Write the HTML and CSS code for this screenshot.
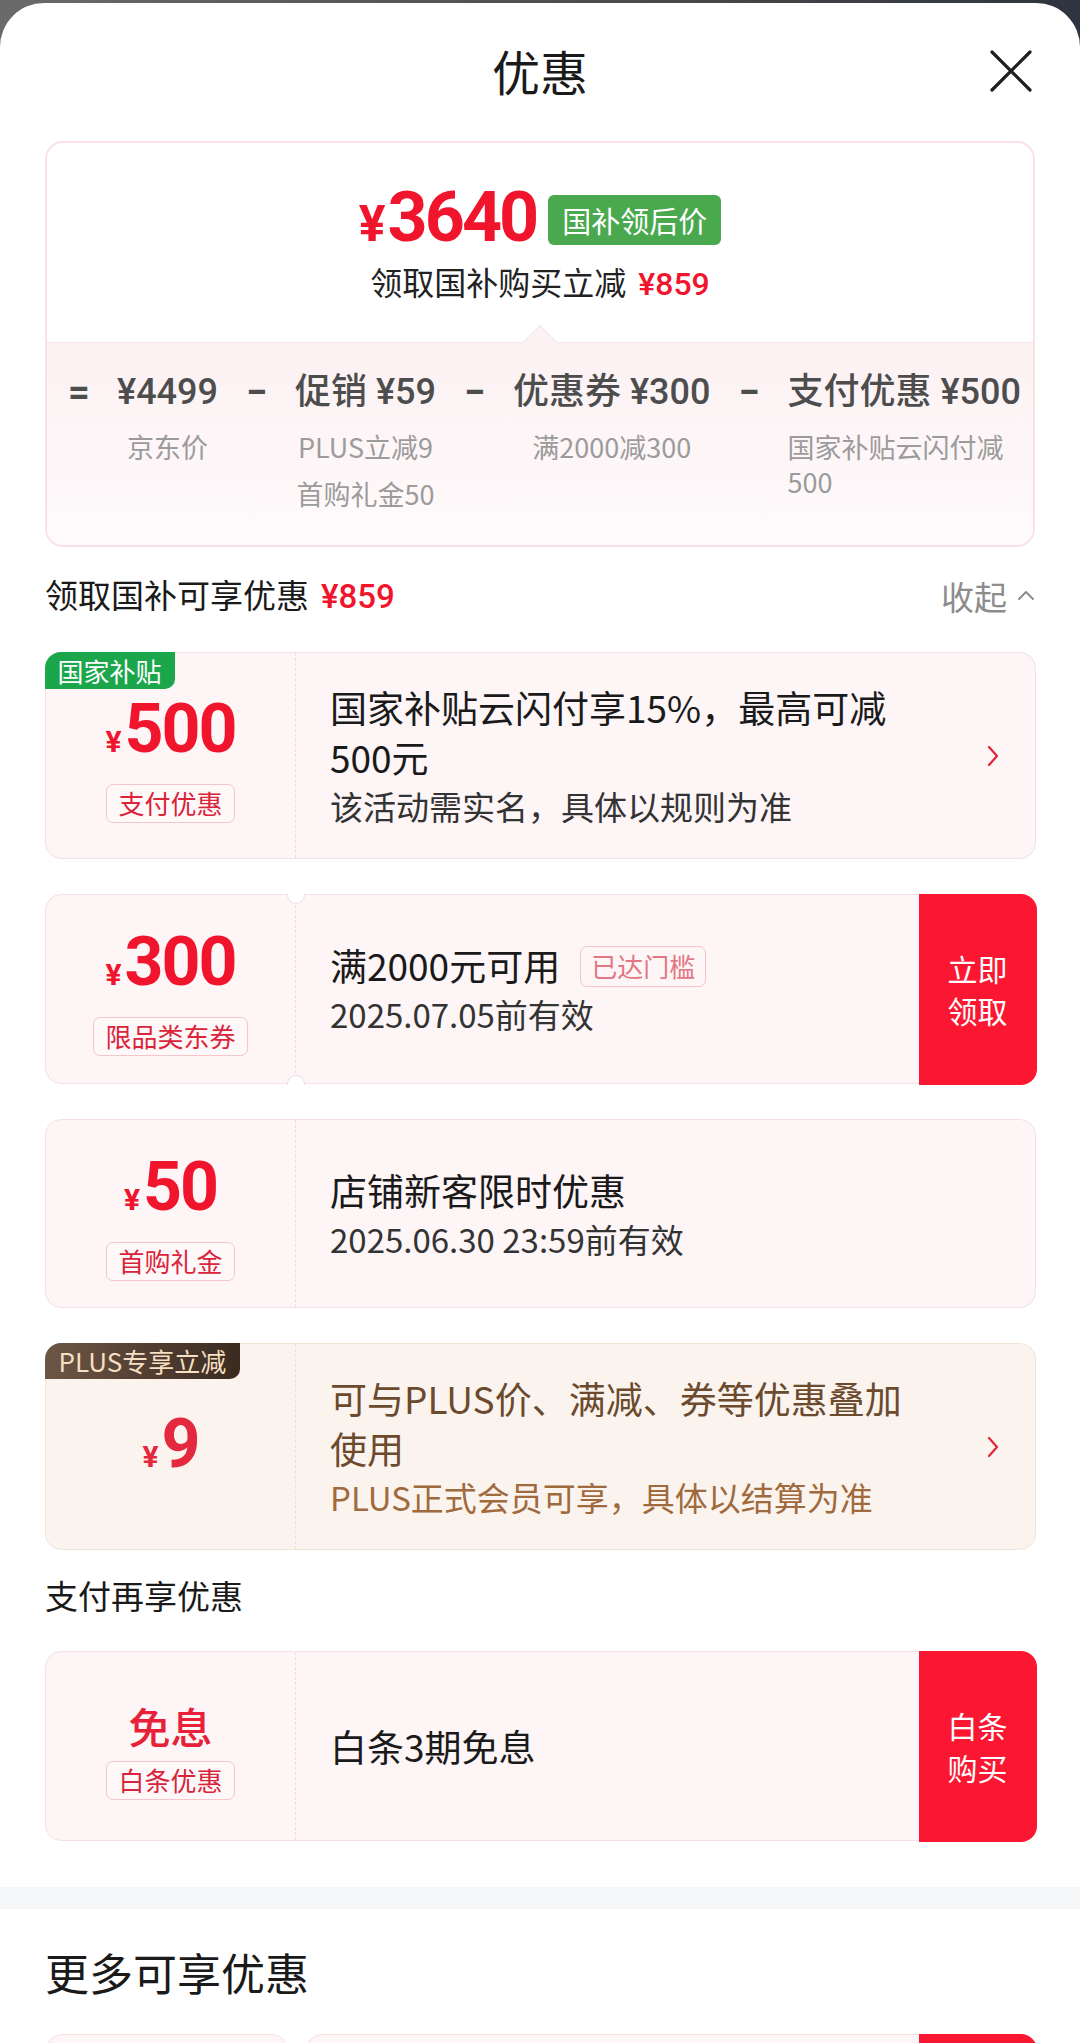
FILE: index.html
```html
<!DOCTYPE html>
<html lang="zh-CN">
<head>
<meta charset="utf-8">
<title>优惠</title>
<link rel="stylesheet" href="styles.css">
</head>
<body>
<div class="sheet">
  <header class="head">
    <h1 class="head-title">优惠</h1>
    <span class="close" aria-label="关闭">
      <svg viewBox="0 0 42 42" width="42" height="42"><path d="M2 2 L40 40 M40 2 L2 40" fill="none" stroke="#1f1f1f" stroke-width="3.2" stroke-linecap="round"/></svg>
    </span>
  </header>

  <section class="summary">
    <div class="sum-top">
      <div class="price-line">
        <span class="price-big"><span class="yen">¥</span>3640</span>
        <span class="tag-green">国补领后价</span>
      </div>
      <div class="sub-line">领取国补购买立减<span class="red">¥859</span></div>
    </div>
    <div class="sum-bottom">
      <span class="pointer"></span>
      <div class="calc">
        <span class="op">=</span>
        <div class="calc-item">
          <div class="amt">¥4499</div>
          <div class="lbl">京东价</div>
        </div>
        <span class="op">−</span>
        <div class="calc-item">
          <div class="amt">促销 ¥59</div>
          <div class="lbl">PLUS立减9</div>
          <div class="lbl">首购礼金50</div>
        </div>
        <span class="op">−</span>
        <div class="calc-item">
          <div class="amt">优惠券 ¥300</div>
          <div class="lbl">满2000减300</div>
        </div>
        <span class="op">−</span>
        <div class="calc-item">
          <div class="amt">支付优惠 ¥500</div>
          <div class="lbl lbl-wrap">国家补贴云闪付减500</div>
        </div>
      </div>
    </div>
  </section>

  <div class="sec">
    <div class="sec-title">领取国补可享优惠<span class="red">¥859</span></div>
    <div class="fold">收起
      <svg width="18" height="11" viewBox="0 0 18 11"><path d="M2 9 L9 2 L16 9" fill="none" stroke="#8c8c8c" stroke-width="2" stroke-linecap="round" stroke-linejoin="round"/></svg>
    </div>
  </div>

  <div class="list">
    <div class="coupon tall">
      <span class="corner-badge green">国家补贴</span>
      <div class="c-left">
        <div class="c-amt"><span class="c-yen">¥</span>500</div>
        <span class="c-tag">支付优惠</span>
      </div>
      <div class="c-body">
        <div class="c-text">
          <p class="c-title">国家补贴云闪付享15%，最高可减500元</p>
          <p class="c-desc">该活动需实名，具体以规则为准</p>
        </div>
        <span class="c-chev"><svg width="12" height="22" viewBox="0 0 12 22"><path d="M2 2 L10 11 L2 20" fill="none" stroke="#e3233a" stroke-width="2.2" stroke-linecap="round" stroke-linejoin="round"/></svg></span>
      </div>
    </div>

    <div class="coupon">
      <span class="notch notch-top"></span>
      <span class="notch notch-bottom"></span>
      <div class="c-left">
        <div class="c-amt"><span class="c-yen">¥</span>300</div>
        <span class="c-tag">限品类东券</span>
      </div>
      <div class="c-body">
        <div class="c-text">
          <p class="c-title">满2000元可用<span class="mini-tag">已达门槛</span></p>
          <p class="c-desc">2025.07.05前有效</p>
        </div>
      </div>
      <div class="c-btn">立即<br>领取</div>
    </div>

    <div class="coupon short">
      <div class="c-left">
        <div class="c-amt"><span class="c-yen">¥</span>50</div>
        <span class="c-tag">首购礼金</span>
      </div>
      <div class="c-body">
        <div class="c-text">
          <p class="c-title">店铺新客限时优惠</p>
          <p class="c-desc">2025.06.30 23:59前有效</p>
        </div>
      </div>
    </div>

    <div class="coupon tall plus">
      <span class="corner-badge dark">PLUS专享立减</span>
      <div class="c-left">
        <div class="c-amt plus-amt"><span class="c-yen">¥</span>9</div>
      </div>
      <div class="c-body">
        <div class="c-text">
          <p class="c-title">可与PLUS价、满减、券等优惠叠加<br>使用</p>
          <p class="c-desc">PLUS正式会员可享，具体以结算为准</p>
        </div>
        <span class="c-chev"><svg width="12" height="22" viewBox="0 0 12 22"><path d="M2 2 L10 11 L2 20" fill="none" stroke="#e3233a" stroke-width="2.2" stroke-linecap="round" stroke-linejoin="round"/></svg></span>
      </div>
    </div>
  </div>

  <div class="sec sec-pay">
    <div class="sec-title">支付再享优惠</div>
  </div>

  <div class="list">
    <div class="coupon">
      <div class="c-left">
        <div class="c-word">免息</div>
        <span class="c-tag">白条优惠</span>
      </div>
      <div class="c-body">
        <div class="c-text">
          <p class="c-title">白条3期免息</p>
        </div>
      </div>
      <div class="c-btn">白条<br>购买</div>
    </div>
  </div>

  <div class="band"></div>

  <h2 class="more-title">更多可享优惠</h2>
  <div class="more-row">
    <div class="more-box"></div>
    <div class="more-box more-main"><span class="more-btn"></span></div>
  </div>
</div>
</body>
</html>
```

FILE: styles.css
```css
* { box-sizing: border-box; margin: 0; padding: 0; }

html, body {
  width: 1080px;
  height: 2043px;
  overflow: hidden;
}

body {
  background: linear-gradient(90deg, #6a6a6a 0%, #4a4a4a 60%, #2e3440 100%);
  font-family: "Noto Sans CJK SC", "Noto Sans", sans-serif;
  color: #1a1a1a;
}

.sheet {
  margin-top: 3px;
  height: 2040px;
  background: #fff;
  border-radius: 44px 44px 0 0;
  overflow: hidden;
}

/* header */
.head {
  position: relative;
  height: 138px;
  padding-top: 37px;
  text-align: center;
}
.head-title {
  font-size: 48px;
  font-weight: 400;
  line-height: 60px;
  color: #1a1a1a;
}
.close {
  position: absolute;
  right: 48px;
  top: 47px;
  width: 42px;
  height: 42px;
}
.close svg { display: block; }

/* summary card */
.summary {
  margin: 0 45px;
  border: 2px solid #fae1e6;
  border-radius: 18px;
  overflow: hidden;
}
.sum-top {
  padding: 46px 0 38px;
  text-align: center;
  background: #fff;
}
.price-line {
  display: flex;
  justify-content: center;
  align-items: center;
  gap: 12px;
  height: 62px;
}
.price-big {
  font-family: Roboto, "Noto Sans", sans-serif;
  font-weight: 700;
  font-size: 70px;
  letter-spacing: -3px;
  line-height: 62px;
  color: #f0142c;
}
.price-big .yen {
  font-size: 50px;
  letter-spacing: 0;
  margin-right: 2px;
}
.tag-green {
  background: #4aa94f;
  color: #fff;
  font-size: 29px;
  height: 50px;
  line-height: 50px;
  padding: 0 14px;
  border-radius: 6px;
}
.sub-line {
  margin-top: 10px;
  font-size: 32px;
  line-height: 40px;
  color: #222;
}
.sub-line .red {
  color: #f0142c;
  font-family: Roboto, sans-serif;
  font-weight: 500;
  margin-left: 12px;
}

.sum-bottom {
  position: relative;
  height: 203px;
  background: linear-gradient(#fcf1f3, #fefafb);
  border-top: 1.5px solid #f8e6ea;
}
.pointer {
  position: absolute;
  left: 50%;
  top: -13px;
  width: 24px;
  height: 24px;
  margin-left: -12px;
  transform: rotate(45deg);
  background: #fcf1f3;
  border-left: 1.5px solid #f8e6ea;
  border-top: 1.5px solid #f8e6ea;
}
.calc {
  display: flex;
  align-items: flex-start;
  gap: 28px;
  padding: 24px 0 0 21px;
}
.op {
  width: 21px;
  font-family: Roboto, sans-serif;
  font-weight: 700;
  font-size: 38px;
  line-height: 50px;
  text-align: center;
  color: #4d4d4d;
}
.calc-item {
  display: flex;
  flex-direction: column;
  align-items: center;
}
.amt {
  font-family: Roboto, "Noto Sans CJK SC", sans-serif;
  font-weight: 500;
  font-size: 36px;
  line-height: 50px;
  color: #4d4d4d;
  white-space: nowrap;
}
.lbl {
  margin-top: 12px;
  font-size: 27px;
  line-height: 35px;
  color: #9b9b9b;
  white-space: nowrap;
}
.lbl + .lbl { margin-top: 12px; }
.lbl-wrap {
  width: 0;
  min-width: 100%;
  white-space: normal;
  text-align: left;
}

/* section headers */
.sec {
  display: flex;
  justify-content: space-between;
  align-items: center;
  padding: 25px 45px 33px;
  font-size: 33px;
  line-height: 44px;
  color: #1a1a1a;
}
.sec .red {
  color: #f0142c;
  font-family: Roboto, sans-serif;
  font-weight: 500;
  margin-left: 12px;
}
.fold {
  display: flex;
  align-items: center;
  gap: 10px;
  color: #8c8c8c;
}
.sec-pay { padding: 23px 45px 34px; }

/* coupon cards */
.list {
  display: flex;
  flex-direction: column;
  gap: 35px;
}
.coupon {
  position: relative;
  display: flex;
  height: 190px;
  margin: 0 44px 0 45px;
  border: 1.5px solid #f6e0e4;
  border-radius: 16px;
  background: #fdf5f6;
}
.coupon.tall { height: 207px; }
.coupon.short { height: 189px; }

.corner-badge {
  position: absolute;
  left: -1.5px;
  top: -1.5px;
  height: 37px;
  padding: 0 13px;
  font-size: 26px;
  line-height: 37px;
  color: #fff;
  border-radius: 16px 0 10px 0;
}
.corner-badge.green { background: #1ba64b; }
.corner-badge.dark {
  padding: 0 14px;
  height: 36px;
  line-height: 36px;
  color: #f6dfc2;
  background: linear-gradient(90deg, #6d5645, #3a2a20);
}

.c-left {
  flex: none;
  width: 250px;
  display: flex;
  flex-direction: column;
  align-items: center;
  justify-content: center;
  padding-top: 8px;
  border-right: 1.5px dashed #f2dadf;
}
.c-amt {
  font-family: Roboto, sans-serif;
  font-weight: 700;
  font-size: 68px;
  line-height: 64px;
  letter-spacing: -2px;
  color: #f0142c;
}
.c-amt .c-yen {
  font-size: 30px;
  letter-spacing: 0;
  margin-right: 3px;
}
.plus-amt { color: #e4283e; }
.c-word {
  font-size: 42px;
  font-weight: 500;
  line-height: 50px;
  color: #e8213a;
}
.c-tag {
  margin-top: 10px;
  height: 39px;
  line-height: 36px;
  padding: 0 11px;
  font-size: 26px;
  color: #d9243a;
  border: 1.5px solid #f2c6cc;
  border-radius: 7px;
  background: #fff8f9;
}

.c-body {
  flex: 1;
  min-width: 0;
  display: flex;
  align-items: center;
  padding-left: 34px;
}
.c-text { flex: 1; min-width: 0; }
.c-title {
  font-size: 37px;
  line-height: 50px;
  color: #1a1a1a;
}
.c-desc {
  font-size: 33px;
  line-height: 48px;
  color: #333;
}
.c-chev {
  flex: none;
  width: 100px;
  display: flex;
  justify-content: flex-end;
  padding-right: 36px;
}
.c-chev svg { display: block; }

.mini-tag {
  display: inline-block;
  vertical-align: 4px;
  margin-left: 20px;
  height: 41px;
  line-height: 38px;
  padding: 0 10px;
  font-size: 26px;
  color: #e37784;
  border: 1.5px solid #f3c5cb;
  border-radius: 7px;
}

.c-btn {
  flex: none;
  width: 118px;
  margin: -1.5px -1.5px -1.5px 0;
  border-radius: 0 16px 16px 0;
  background: #fb1631;
  color: #fff;
  font-size: 30px;
  line-height: 42px;
  display: flex;
  align-items: center;
  justify-content: center;
  text-align: center;
}

.notch {
  position: absolute;
  left: 241px;
  width: 18px;
  height: 10px;
  background: #fff;
  border: 1.5px solid #f2dadf;
}
.notch-top {
  top: -1.5px;
  border-top: none;
  border-radius: 0 0 9px 9px;
}
.notch-bottom {
  bottom: -1.5px;
  border-bottom: none;
  border-radius: 9px 9px 0 0;
}

/* plus variant */
.coupon.plus {
  background: #fbf4ee;
  border-color: #f1e5da;
}
.plus .c-left { border-right-color: #ede0d3; }
.plus .c-title { color: #6b4a2e; }
.plus .c-desc { color: #a06a3d; }

/* more section */
.band {
  height: 22px;
  margin-top: 46px;
  background: #f5f6f8;
}
.more-title {
  padding: 35px 45px 0;
  font-size: 44px;
  font-weight: 400;
  line-height: 56px;
  color: #1a1a1a;
}
.more-row {
  display: grid;
  grid-template-columns: 242px 1fr;
  gap: 18px;
  height: 150px;
  margin: 34px 44px 0 46px;
}
.more-box {
  border: 1.5px solid #f6e0e4;
  border-radius: 16px;
  background: #fdf5f6;
}
.more-main {
  display: flex;
  justify-content: flex-end;
}
.more-btn {
  width: 118px;
  margin: -1.5px -1.5px -1.5px 0;
  border-radius: 0 16px 16px 0;
  background: #fb1631;
}
```
